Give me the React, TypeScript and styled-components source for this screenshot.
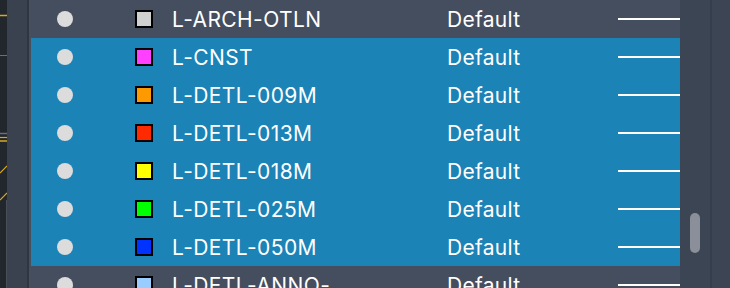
import React from 'react';
import styled, { createGlobalStyle } from 'styled-components';

const GlobalStyle = createGlobalStyle`
  html, body {
    margin: 0;
    padding: 0;
    background: #3a4250;
    overflow: hidden;
  }
`;

const Frame = styled.div`
  display: flex;
  width: 730px;
  height: 288px;
  overflow: hidden;
  font-family: Inter, "Liberation Sans", Arial, sans-serif;
`;

const Canvas = styled.div`
  width: 7px;
  background: #22272d;
  flex-shrink: 0;
`;

const Gutter = styled.div`
  width: 20px;
  background: #3a4250;
  border-right: 2px solid #2f3641;
  flex-shrink: 0;
`;

const Edge = styled.div`
  width: 2px;
  background: #474f5c;
  flex-shrink: 0;
`;

const List = styled.div`
  flex: 1;
  display: flex;
  flex-direction: column;
  background: #454e5e;
`;

const Row = styled.div<{ $selected?: boolean }>`
  display: flex;
  align-items: center;
  height: 38px;
  flex-shrink: 0;
  background: ${(p) => (p.$selected ? '#1c83b6' : '#454e5e')};
  color: #ffffff;
`;

const EyeCell = styled.div`
  width: 104px;
  padding-left: 26px;
  box-sizing: border-box;
  display: flex;
  align-items: center;
`;

const Dot = styled.span`
  width: 16px;
  height: 16px;
  border-radius: 50%;
  background: #dcdcdc;
`;

const Swatch = styled.span<{ $color: string }>`
  width: 18px;
  height: 18px;
  box-sizing: border-box;
  border: 2px solid #000;
  background: ${(p) => p.$color};
  margin-right: 19px;
  flex-shrink: 0;
`;

const Name = styled.span`
  width: 275px;
  font-size: 21px;
  letter-spacing: 0.4px;
  white-space: nowrap;
`;

const Linetype = styled.span`
  width: 171px;
  font-size: 21px;
  letter-spacing: 0.3px;
`;

const LineWeight = styled.span`
  flex: 1;
  height: 2px;
  background: #ffffff;
  margin-top: -1px;
`;

const Track = styled.div`
  width: 50px;
  flex-shrink: 0;
  display: flex;
  background: #3b4553;
`;

const TrackLane = styled.div`
  width: 30px;
  display: flex;
  flex-direction: column;
  align-items: center;
  padding-top: 213px;
  border-right: 2px solid #353e4b;
`;

const Thumb = styled.div`
  width: 10px;
  height: 40px;
  border-radius: 5px;
  background: #8a8f99;
`;

interface Layer {
  name: string;
  color: string;
  selected?: boolean;
}

const layers: Layer[] = [
  { name: 'L-ARCH-OTLN', color: '#d0d0d0' },
  { name: 'L-CNST', color: '#ff40ff', selected: true },
  { name: 'L-DETL-009M', color: '#ff9900', selected: true },
  { name: 'L-DETL-013M', color: '#ff2a00', selected: true },
  { name: 'L-DETL-018M', color: '#ffff00', selected: true },
  { name: 'L-DETL-025M', color: '#00ff00', selected: true },
  { name: 'L-DETL-050M', color: '#0033ff', selected: true },
  { name: 'L-DETL-ANNO-', color: '#99ccff' },
];

const CanvasDrawing = () => (
  <svg width="7" height="288" viewBox="0 0 7 288">
    <line x1="0" y1="15.5" x2="7" y2="15.5" stroke="#d9a822" strokeWidth="1.5" />
    <line x1="0" y1="55.5" x2="7" y2="55.5" stroke="#6b6f74" strokeWidth="1" />
    <line x1="0" y1="133.5" x2="7" y2="133.5" stroke="#6b6f74" strokeWidth="1.5" />
    <line x1="0" y1="137.5" x2="7" y2="137.5" stroke="#d9a822" strokeWidth="1.2" />
    <line x1="0" y1="141" x2="7" y2="141" stroke="#d9a822" strokeWidth="1.5" />
    <line x1="0" y1="173" x2="7" y2="166" stroke="#d9a822" strokeWidth="1.2" />
    <line x1="0" y1="200" x2="7" y2="193" stroke="#d9a822" strokeWidth="1.2" />
    <line x1="6.5" y1="200" x2="6.5" y2="288" stroke="#4a4f56" strokeWidth="1" />
  </svg>
);

export default function App() {
  return (
    <>
      <GlobalStyle />
      <Frame>
        <Canvas>
          <CanvasDrawing />
        </Canvas>
        <Gutter />
        <Edge />
        <List>
          {layers.map((layer) => (
            <Row key={layer.name} $selected={layer.selected}>
              <EyeCell>
                <Dot />
              </EyeCell>
              <Swatch $color={layer.color} />
              <Name>{layer.name}</Name>
              <Linetype>Default</Linetype>
              <LineWeight />
            </Row>
          ))}
        </List>
        <Track>
          <TrackLane>
            <Thumb />
          </TrackLane>
        </Track>
      </Frame>
    </>
  );
}
